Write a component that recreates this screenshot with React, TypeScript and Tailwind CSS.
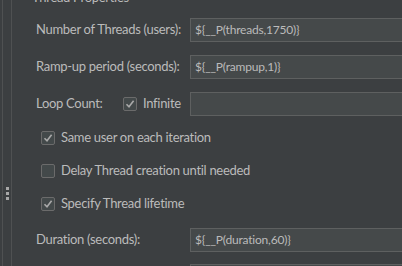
import React from 'react';

const font = { fontFamily: 'Lato, "Noto Sans", sans-serif' };

function Field({ value }: { value: string }) {
  return (
    <div className="h-[24px] w-[240px] shrink-0 border border-[#5e6060] bg-[#45494a] pl-[4px] flex items-center text-[12px] tracking-[-0.2px] text-[#bbbbbb] whitespace-nowrap">
      {value}
    </div>
  );
}

function Check({ checked }: { checked: boolean }) {
  return (
    <div className="w-[14px] h-[14px] shrink-0 rounded-[2px] border border-[#6b6b6b] bg-[#43494a] flex items-center justify-center">
      {checked && (
        <svg width="10" height="10" viewBox="0 0 10 10">
          <path d="M1.5 5.2 L4 7.8 L8.6 1.8" fill="none" stroke="#a9a9a9" strokeWidth="1.6" />
        </svg>
      )}
    </div>
  );
}

function CheckRow({ label, checked, mt }: { label: string; checked: boolean; mt: string }) {
  return (
    <div className={`h-[24px] shrink-0 flex items-center pl-[29px] gap-[6px] ${mt}`}>
      <Check checked={checked} />
      <span>{label}</span>
    </div>
  );
}

export default function App() {
  return (
    <div className="w-[402px] h-[266px] bg-[#3c3f41] overflow-hidden flex text-[13px] tracking-[-0.3px] text-[#bbbbbb]" style={font}>
      {/* splitter strip */}
      <div className="w-[2px] shrink-0" />
      <div className="w-[1px] shrink-0 bg-[#4f5152]" />
      <div className="w-[8px] shrink-0 flex flex-col items-center pt-[187px] gap-[2px]">
        <div className="w-[3px] h-[3px] bg-[#a8a8a8]" />
        <div className="w-[3px] h-[3px] bg-[#a8a8a8]" />
        <div className="w-[3px] h-[3px] bg-[#a8a8a8]" />
      </div>
      <div className="w-[1px] shrink-0 bg-[#4f5152]" />

      <div className="flex-1 flex flex-col min-w-0 whitespace-nowrap">
        <div className="h-[16px] shrink-0 -mt-[11px] pl-[20px] leading-[16px]">Thread Properties</div>

        <div className="h-[24px] shrink-0 mt-[13px] flex items-center">
          <span className="w-[178px] shrink-0 pl-[24px]">Number of Threads (users):</span>
          <Field value="${__P(threads,1750)}" />
        </div>

        <div className="h-[24px] shrink-0 mt-[13px] flex items-center">
          <span className="w-[178px] shrink-0 pl-[24px]">Ramp-up period (seconds):</span>
          <Field value="${__P(rampup,1)}" />
        </div>

        <div className="h-[24px] shrink-0 mt-[13px] flex items-center">
          <span className="w-[111px] shrink-0 pl-[24px]">Loop Count:</span>
          <Check checked />
          <span className="w-[53px] shrink-0 pl-[6px]">Infinite</span>
          <Field value="" />
        </div>

        <CheckRow label="Same user on each iteration" checked mt="mt-[10px]" />
        <CheckRow label="Delay Thread creation until needed" checked={false} mt="mt-[9px]" />
        <CheckRow label="Specify Thread lifetime" checked mt="mt-[9px]" />

        <div className="h-[24px] shrink-0 mt-[12px] flex items-center">
          <span className="w-[178px] shrink-0 pl-[24px]">Duration (seconds):</span>
          <Field value="${__P(duration,60)}" />
        </div>

        <div className="h-[24px] shrink-0 mt-[12px] flex items-center">
          <span className="w-[178px] shrink-0" />
          <Field value="" />
        </div>
      </div>
    </div>
  );
}
